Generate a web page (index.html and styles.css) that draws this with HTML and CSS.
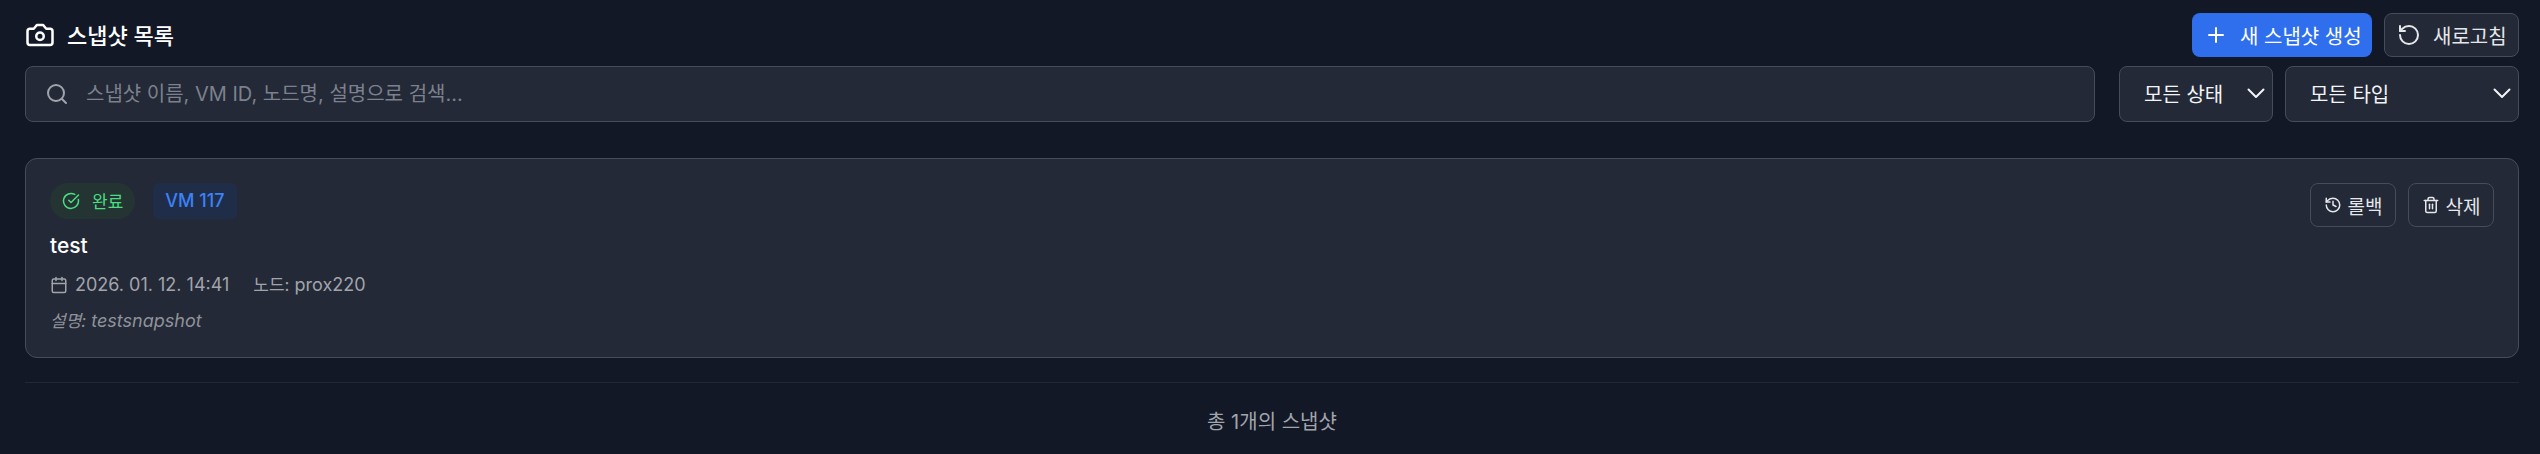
FILE: index.html
```html
<!DOCTYPE html>
<html lang="ko">
<head>
	<meta charset="utf-8">
	<title>스냅샷 목록</title>
	<link rel="stylesheet" href="styles.css">
</head>
<body>
	<div class="header">
		<h1 class="title">
			<svg class="icon-title" viewBox="0 0 24 24"><path d="M14.5 4h-5L7 7H4a2 2 0 0 0-2 2v9a2 2 0 0 0 2 2h16a2 2 0 0 0 2-2V9a2 2 0 0 0-2-2h-3l-2.5-3z"/><circle cx="12" cy="13" r="3"/></svg>
			<span class="title-text">스냅샷 목록</span>
		</h1>
		<div class="actions">
			<button class="btn btn-primary">
				<svg class="icon-btn" viewBox="0 0 24 24"><path d="M5 12h14"/><path d="M12 5v14"/></svg>
				새 스냅샷 생성
			</button>
			<button class="btn btn-ghost">
				<svg class="icon-btn" viewBox="0 0 24 24"><path d="M3 12a9 9 0 1 0 9-9 9.75 9.75 0 0 0-6.74 2.74L3 8"/><path d="M3 3v5h5"/></svg>
				새로고침
			</button>
		</div>
	</div>

	<div class="filters">
		<div class="search">
			<svg class="icon-search" viewBox="0 0 24 24"><circle cx="11" cy="11" r="8"/><path d="m21 21-4.3-4.3"/></svg>
			<input type="text" placeholder="스냅샷 이름, VM ID, 노드명, 설명으로 검색...">
		</div>
		<div class="select select-status">
			<span>모든 상태</span>
			<svg class="icon-chevron" viewBox="0 0 18 11"><path d="M1.5 1.5 9 9l7.5-7.5"/></svg>
		</div>
		<div class="select select-type">
			<span>모든 타입</span>
			<svg class="icon-chevron" viewBox="0 0 18 11"><path d="M1.5 1.5 9 9l7.5-7.5"/></svg>
		</div>
	</div>

	<div class="card">
		<div class="card-main">
			<div class="badges">
				<span class="badge badge-done">
					<svg class="icon-check" viewBox="0 0 24 24"><path d="M21.8 10A10 10 0 1 1 17 3.3"/><path d="m9 11 3 3L22 4"/></svg>
					완료
				</span>
				<span class="badge badge-vm">VM 117</span>
			</div>
			<div class="name">test</div>
			<div class="meta">
				<span class="meta-item">
					<svg class="icon-meta" viewBox="0 0 24 24"><path d="M8 2v4"/><path d="M16 2v4"/><rect x="3" y="4" width="18" height="18" rx="2"/><path d="M3 10h18"/></svg>
					2026. 01. 12. 14:41
				</span>
				<span><span class="label">노드:</span> prox220</span>
			</div>
			<div class="desc"><span class="label">설명:</span> testsnapshot</div>
		</div>
		<div class="card-actions">
			<button class="btn-small">
				<svg class="icon-small" viewBox="0 0 24 24"><path d="M3 12a9 9 0 1 0 9-9 9.75 9.75 0 0 0-6.74 2.74L3 8"/><path d="M3 3v5h5"/><path d="M12 7v5l4 2"/></svg>
				롤백
			</button>
			<button class="btn-small">
				<svg class="icon-small" viewBox="0 0 24 24"><path d="M3 6h18"/><path d="M19 6v14a2 2 0 0 1-2 2H7a2 2 0 0 1-2-2V6"/><path d="M8 6V4a2 2 0 0 1 2-2h4a2 2 0 0 1 2 2v2"/><path d="M10 11v6"/><path d="M14 11v6"/></svg>
				삭제
			</button>
		</div>
	</div>

	<div class="footer">총 1개의 스냅샷</div>
</body>
</html>
```

FILE: styles.css
```css
* {
	box-sizing: border-box;
}
html, body {
	margin: 0;
	height: 100%;
}
body {
	padding: 13px 21px 0 25px;
	background-color: #121826;
	color: #fff;
	font-family: Inter, "Noto Sans CJK KR", sans-serif;
	overflow: hidden;
}
svg {
	fill: none;
	stroke: currentColor;
	stroke-width: 2;
	stroke-linecap: round;
	stroke-linejoin: round;
	flex-shrink: 0;
}
button {
	font-family: inherit;
	white-space: nowrap;
	cursor: pointer;
}

.header {
	display: flex;
	justify-content: space-between;
	height: 44px;
}
.title {
	display: flex;
	align-items: center;
	gap: 12px;
	margin: 0;
	font-size: 22px;
	font-weight: 500;
}
.title-text {
	padding-bottom: 3px;
}
.icon-title {
	width: 30px;
	height: 30px;
}
.actions {
	display: flex;
	gap: 12px;
}
.btn {
	display: flex;
	align-items: center;
	gap: 12px;
	height: 44px;
	padding: 0 12px;
	border-radius: 8px;
	font-size: 20px;
	font-weight: 400;
	color: #fff;
}
.btn-primary {
	width: 180px;
	background-color: #2f6fed;
	border: 0;
}
.btn-ghost {
	width: 135px;
	background-color: #232936;
	border: 1px solid #464c5a;
	color: #e5e7eb;
}
.icon-btn {
	width: 24px;
	height: 24px;
}

.filters {
	display: flex;
	margin-top: 9px;
	height: 56px;
}
.search {
	display: flex;
	align-items: center;
	gap: 17px;
	flex: 1;
	padding: 0 19px;
	background-color: #232936;
	border: 1px solid #464c5a;
	border-radius: 8px;
	margin-right: 24px;
}
.search input {
	flex: 1;
	border: 0;
	outline: 0;
	padding: 0;
	background: transparent;
	color: #fff;
	font-family: inherit;
	font-size: 20px;
}
.search input::placeholder {
	color: #7c818d;
}
.icon-search {
	width: 24px;
	height: 24px;
	color: #a1a4ab;
}
.select {
	display: flex;
	align-items: center;
	justify-content: space-between;
	padding: 0 7px 2px 24px;
	background-color: #232936;
	border: 1px solid #464c5a;
	border-radius: 8px;
	font-size: 20px;
	color: #f3f4f6;
}
.select-status {
	width: 154px;
}
.select-type {
	width: 234px;
	margin-left: 12px;
}
.icon-chevron {
	width: 18px;
	height: 11px;
}

.card {
	display: flex;
	justify-content: space-between;
	margin-top: 36px;
	height: 200px;
	padding: 24px;
	background-color: #232936;
	border: 1px solid #464c5a;
	border-radius: 12px;
}
.badges {
	display: flex;
	gap: 18px;
}
.badge {
	display: flex;
	align-items: center;
	height: 36px;
	padding-bottom: 1px;
	font-size: 18px;
	font-weight: 500;
}
.badge-done {
	gap: 12px;
	padding-left: 12px;
	padding-right: 12px;
	border-radius: 18px;
	background-color: #243433;
	color: #4ade80;
	font-size: 17px;
	font-weight: 400;
}
.badge-vm {
	padding-left: 12px;
	padding-right: 12px;
	border-radius: 6px;
	background-color: #202d49;
	color: #3b82f6;
}
.icon-check {
	width: 18px;
	height: 18px;
}
.name {
	margin-top: 13px;
	font-size: 21px;
	font-weight: 500;
	line-height: 28px;
}
.meta {
	display: flex;
	gap: 24px;
	margin-top: 13px;
	font-size: 18px;
	line-height: 24px;
	color: #a1a4ab;
}
.meta-item {
	display: flex;
	align-items: center;
	gap: 7px;
}
.icon-meta {
	width: 18px;
	height: 18px;
}
.label {
	font-size: 17px;
}
.desc {
	margin-top: 12px;
	font-size: 18px;
	line-height: 24px;
	font-style: italic;
	color: #8f929a;
}
.card-actions {
	display: flex;
	gap: 12px;
}
.btn-small {
	display: flex;
	align-items: center;
	gap: 6px;
	height: 44px;
	padding: 0 12.5px;
	background: transparent;
	border: 1px solid #464c5a;
	border-radius: 8px;
	color: #e5e7eb;
	font-size: 19px;
}
.icon-small {
	width: 18px;
	height: 18px;
}

.footer {
	margin-top: 24px;
	padding-top: 24px;
	border-top: 1px solid #222835;
	text-align: center;
	font-size: 20px;
	line-height: 30px;
	color: #a1a4ab;
}
```
